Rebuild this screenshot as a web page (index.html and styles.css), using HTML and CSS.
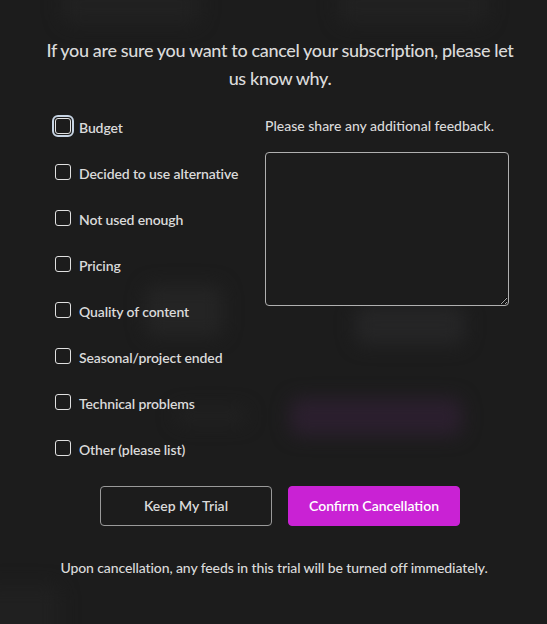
FILE: index.html
```html
<!DOCTYPE html>
<html lang="en">
<head>
<meta charset="utf-8">
<title>Cancel subscription</title>
<link rel="stylesheet" href="styles.css">
</head>
<body>
<div class="backdrop" aria-hidden="true">
  <div class="ghost g1"></div>
  <div class="ghost g2"></div>
  <div class="ghost g3"></div>
  <div class="ghost g4"></div>
  <div class="ghost g5"></div>
  <div class="ghost g6"></div>
  <div class="ghost g7"></div>
</div>
<main class="modal">
  <div class="content">
    <h1 class="title">If you are sure you want to cancel your subscription, please let us know why.</h1>
    <form class="form">
      <div class="options">
        <label class="option"><input type="checkbox" class="check focused"><span>Budget</span></label>
        <label class="option"><input type="checkbox" class="check"><span>Decided to use alternative</span></label>
        <label class="option"><input type="checkbox" class="check"><span>Not used enough</span></label>
        <label class="option"><input type="checkbox" class="check"><span>Pricing</span></label>
        <label class="option"><input type="checkbox" class="check"><span>Quality of content</span></label>
        <label class="option"><input type="checkbox" class="check"><span>Seasonal/project ended</span></label>
        <label class="option"><input type="checkbox" class="check"><span>Technical problems</span></label>
        <label class="option"><input type="checkbox" class="check"><span>Other (please list)</span></label>
      </div>
      <div class="feedback">
        <label class="feedback-label" for="fb">Please share any additional feedback.</label>
        <textarea id="fb" class="feedback-box"></textarea>
      </div>
    </form>
    <div class="actions">
      <button class="btn btn-outline" type="button">Keep My Trial</button>
      <button class="btn btn-primary" type="button">Confirm Cancellation</button>
    </div>
  </div>
  <p class="note">Upon cancellation, any feeds in this trial will be turned off immediately.</p>
</main>
</body>
</html>
```

FILE: styles.css
```css
html, body {
  margin: 0;
  padding: 0;
  background: #1c1c1c;
  width: 547px;
  height: 624px;
  overflow: hidden;
  font-family: Lato, "Open Sans", sans-serif;
  color: #dcdcdc;
}

.backdrop {
  position: absolute;
  inset: 0;
  z-index: 0;
  overflow: hidden;
}

.ghost {
  position: absolute;
  border-radius: 10px;
  filter: blur(9px);
}
.g1 { left: 62px; top: -14px; width: 138px; height: 38px; background: #212121; }
.g2 { left: 338px; top: -14px; width: 150px; height: 38px; background: #212121; }
.g3 { left: 145px; top: 285px; width: 78px; height: 52px; background: #242424; }
.g4 { left: 355px; top: 305px; width: 110px; height: 40px; background: #252526; }
.g5 { left: 290px; top: 398px; width: 172px; height: 38px; background: #2b1f2e; }
.g6 { left: 175px; top: 408px; width: 72px; height: 16px; background: #212121; }
.g7 { left: -20px; top: 585px; width: 80px; height: 60px; background: #202020; }

.modal {
  position: relative;
  z-index: 1;
  padding-top: 36px;
}

.content {
  margin: 0 32px 0 45px;
}

.title {
  margin: 0 -4px;
  font-size: 18px;
  line-height: 28px;
  font-weight: 500;
  letter-spacing: -0.35px;
  text-align: center;
  color: #dadada;
}

.form {
  display: grid;
  grid-template-columns: 210px 244px;
  margin: 12px 0 0 10px;
}

.options {
  display: flex;
  flex-direction: column;
}

.option {
  display: flex;
  align-items: center;
  gap: 8px;
  height: 46px;
  font-size: 14px;
  font-weight: 600;
  letter-spacing: -0.12px;
  color: #dadada;
}

.check {
  appearance: none;
  -webkit-appearance: none;
  margin: 0 0 2px;
  width: 16px;
  height: 16px;
  border: 1.5px solid #e0e0e0;
  border-radius: 3px;
  background: transparent;
  flex: none;
}

.check.focused {
  outline: 2px solid #c6d3e2;
  outline-offset: 1px;
  border-radius: 3px;
}

.feedback {
  display: flex;
  flex-direction: column;
}

.feedback-label {
  height: 44px;
  line-height: 44px;
  font-size: 14px;
  font-weight: 500;
  color: #dadada;
}

.feedback-box {
  margin-top: 4px;
  box-sizing: border-box;
  width: 244px;
  height: 154px;
  background: #1c1c1c;
  border: 1px solid #b0b0b0;
  border-radius: 4px;
  color: #dadada;
}

.actions {
  display: flex;
  justify-content: center;
  gap: 16px;
  margin-top: 14px;
}

.btn {
  box-sizing: border-box;
  width: 172px;
  height: 40px;
  padding: 0 0 2px;
  border-radius: 4px;
  font-family: Lato, "Open Sans", sans-serif;
  font-size: 14px;
  font-weight: 600;
  cursor: pointer;
}

.btn-outline {
  background: transparent;
  border: 1px solid #9a9a9a;
  color: #dadada;
}

.btn-primary {
  background: #c922d4;
  border: 1px solid #c922d4;
  color: #ffffff;
}

.note {
  margin: 32px 0 0 1px;
  text-align: center;
  font-size: 14px;
  line-height: 20px;
  font-weight: 500;
  letter-spacing: -0.1px;
  color: #dadada;
}
```
